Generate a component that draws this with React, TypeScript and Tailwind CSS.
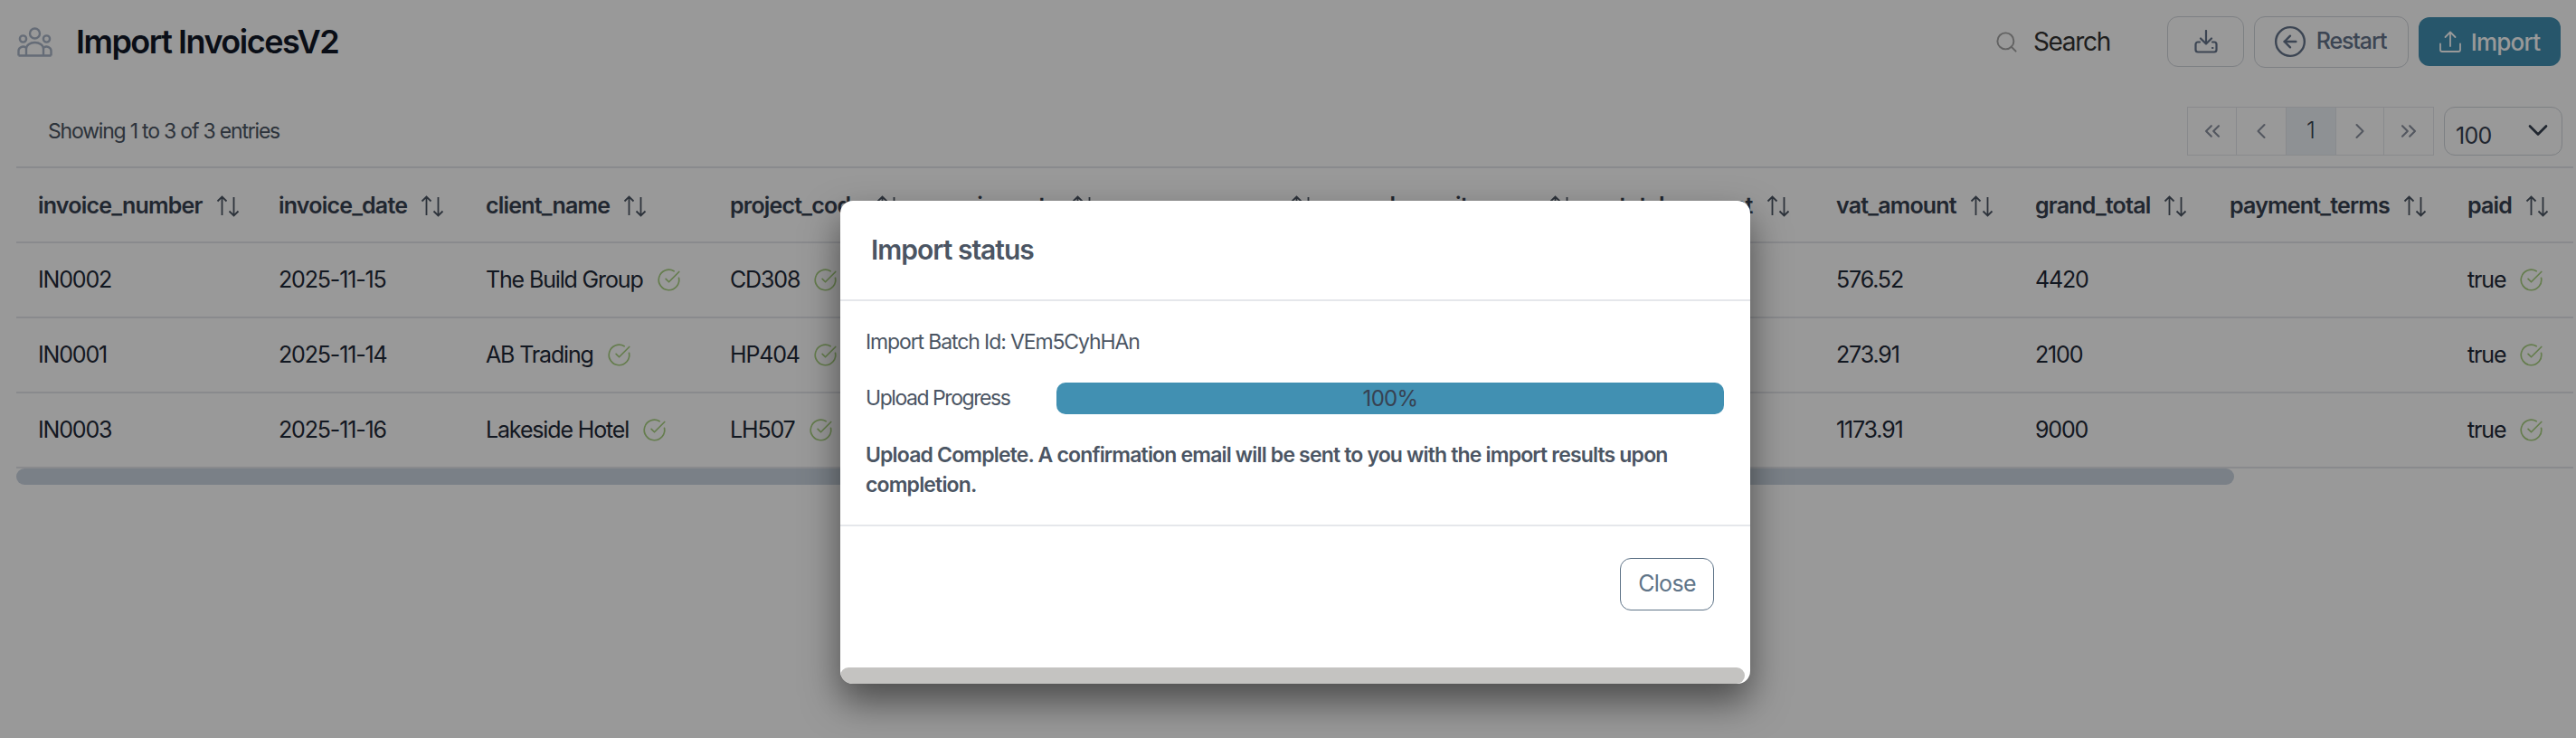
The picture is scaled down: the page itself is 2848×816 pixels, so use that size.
import { ChevronDown, ChevronLeft, ChevronRight, ChevronsLeft, ChevronsRight, CircleArrowLeft, CircleCheckBig, Search } from "lucide-react";

const FONT = "font-['Inter','Liberation_Sans',sans-serif]";

function SortIcon() {
  return (
    <svg width="26" height="24" viewBox="0 0 26 24" fill="none" stroke="#4b5563" strokeWidth="1.8" className="shrink-0">
      <path d="M6.5 22V1.5M1.5 6.5l5-5 5 5" />
      <path d="M19.5 2v20.5M14.5 17.5l5 5 5-5" />
    </svg>
  );
}

function Check() {
  return <CircleCheckBig size={27} strokeWidth={1.5} className="shrink-0 text-[#a8d080]" />;
}

const columns = [
  { name: "invoice_number", w: "w-[266px]" },
  { name: "invoice_date", w: "w-[229px]" },
  { name: "client_name", w: "w-[270px]" },
  { name: "project_code", w: "w-[249px]" },
  { name: "price_rate", w: "w-[254px]" },
  { name: "currency", w: "w-[200px]" },
  { name: "sales_unit_name", w: "w-[280px]" },
  { name: "total_amount", w: "w-[240px]" },
  { name: "vat_amount", w: "w-[220px]" },
  { name: "grand_total", w: "w-[215px]" },
  { name: "payment_terms", w: "w-[263px]" },
  { name: "paid", w: "w-[141px]" },
];

const rows = [
  ["IN0002", "2025-11-15", "The Build Group", "CD308", "", "", "", "", "576.52", "4420", "", "true"],
  ["IN0001", "2025-11-14", "AB Trading", "HP404", "", "", "", "", "273.91", "2100", "", "true"],
  ["IN0003", "2025-11-16", "Lakeside Hotel", "LH507", "", "", "", "", "1173.91", "9000", "", "true"],
];

const checked = [2, 3, 11];

export default function App() {
  return (
    <div className={`relative h-[816px] w-[2848px] overflow-hidden bg-white ${FONT}`}>
      <header className="flex h-[92px] items-center justify-between pl-[19px] pr-[17px]">
        <div className="flex items-center gap-[26px]">
          <svg width="39" height="33" viewBox="0 0 39 33" fill="none" stroke="#a9b4c6" strokeWidth="2.4">
            <circle cx="19.5" cy="7" r="5.5" />
            <circle cx="6.5" cy="13" r="3.6" />
            <circle cx="32.5" cy="13" r="3.6" />
            <path d="M10 31.5V24a9.5 7 0 0 1 19 0v7.5" />
            <path d="M1.5 31.5V26a5 4.5 0 0 1 8-3.5M37.5 31.5V26a5 4.5 0 0 0-8-3.5" />
            <path d="M1.5 31.5h36" />
          </svg>
          <h1 className="text-[36px] font-semibold leading-none tracking-[-1.5px] text-[#111827]">Import InvoicesV2</h1>
        </div>
        <div className="flex items-center">
          <Search size={27} strokeWidth={1.7} className="mr-[16px] text-[#a3a3a3]" />
          <span className="mr-[63px] text-[28px] tracking-[-1.3px] text-[#333]">Search</span>
          <button className="mr-[11px] flex h-[56px] w-[85px] items-center justify-center rounded-[12px] border-[1.5px] border-[#d1d5db]">
            <svg width="26" height="26" viewBox="0 0 26 26" fill="none" stroke="#64748b" strokeWidth="2.2" strokeLinecap="round" strokeLinejoin="round">
              <path d="M13 1v14M7 9.500l6 6 6-6" />
              <path d="M6 13.500H4a2.500 2.500 0 0 0-2.500 2.500v6A2.500 2.500 0 0 0 4 24.500h18a2.500 2.500 0 0 0 2.500-2.500v-6a2.500 2.500 0 0 0-2.500-2.500h-2" />
              <path d="M20 20h.4" />
            </svg>
          </button>
          <button className="mr-[11px] flex h-[57px] w-[171px] items-center justify-center gap-[10px] rounded-[12px] border-[1.5px] border-[#d1d5db] pr-[4px] text-[25px] font-medium tracking-[-1.1px] text-[#64748b]">
            <CircleArrowLeft size={38} strokeWidth={1.5} className="text-[#64748b]" />
            Restart
          </button>
          <button className="flex h-[54px] w-[157px] items-center justify-center gap-[11px] rounded-[12px] bg-[#4190b2] text-[26px] font-medium tracking-[-0.8px] text-white">
            <svg width="24" height="24" viewBox="0 0 24 24" fill="none" stroke="white" strokeWidth="1.8" strokeLinecap="round" strokeLinejoin="round">
              <path d="M12 17V1.500M6.500 7L12 1.500 17.500 7" />
              <path d="M1 14.500v6.500a2 2 0 0 0 2 2h18a2 2 0 0 0 2-2v-6.500" />
            </svg>
            Import
          </button>
        </div>
      </header>

      <div className="flex h-[92px] items-start justify-between pl-[53px] pr-[15px] pt-[26px]">
        <span className="mt-[12px] text-[23px] leading-[30px] tracking-[-1.2px] text-[#4b5563]">Showing 1 to 3 of 3 entries</span>
        <div className="flex items-start gap-[11px]">
          <div className="flex h-[54px] border border-[#e5e7eb] text-[#8b92a0]">
            <div className="flex w-[54px] items-center justify-center border-r border-[#e5e7eb]"><ChevronsLeft size={28} strokeWidth={1.8} /></div>
            <div className="flex w-[55px] items-center justify-center border-r border-[#e5e7eb]"><ChevronLeft size={28} strokeWidth={1.8} /></div>
            <div className="flex w-[54px] items-center justify-center bg-[#edf2f7] text-[25px] font-light text-[#374151]">1</div>
            <div className="flex w-[54px] items-center justify-center border-x border-[#e5e7eb]"><ChevronRight size={28} strokeWidth={1.8} /></div>
            <div className="flex w-[54px] items-center justify-center"><ChevronsRight size={28} strokeWidth={1.8} /></div>
          </div>
          <div className="flex h-[54px] w-[131px] items-start justify-between rounded-[12px] border border-[#d1d5db] pl-[12px] pr-[8px] text-[#374151]">
            <span className="mt-[14px] text-[25px] leading-[34px] tracking-[-0.7px]">100</span>
            <ChevronDown size={36} strokeWidth={1.8} className="mt-[7px]" />
          </div>
        </div>
      </div>

      <div className="ml-[18px] w-[2827px] overflow-hidden">
        <table className="w-[2827px] table-fixed border-collapse border-t-2 border-[#e5e7eb]">
          <thead>
            <tr className="h-[83px] border-b-2 border-[#e5e7eb]">
              {columns.map((c) => (
                <th key={c.name} className={`${c.w} pl-[24px] pt-[3px] text-left align-middle`}>
                  <div className="flex items-center gap-[15px] text-[25px] font-semibold tracking-[-0.8px] text-[#374151]">
                    {c.name}
                    <SortIcon />
                  </div>
                </th>
              ))}
            </tr>
          </thead>
          <tbody>
            {rows.map((r) => (
              <tr key={r[0]} className="h-[83px] border-b-2 border-[#e5e7eb]">
                {r.map((v, i) => (
                  <td key={i} className="pl-[24px] align-middle">
                    <div className="flex items-center gap-[15px] text-[25px] tracking-[-1.15px] text-[#1f2937]">
                      {v}
                      {checked.includes(i) ? <Check /> : null}
                    </div>
                  </td>
                ))}
              </tr>
            ))}
          </tbody>
        </table>
        <div className="h-[18px] w-[2452px] rounded-full bg-[#cbd5e1]" />
      </div>

      <div className="absolute inset-0 bg-black/40" />

      <div className="absolute left-[929px] top-[222px] flex h-[534px] w-[1006px] flex-col overflow-hidden rounded-[14px] bg-white shadow-[0_20px_40px_rgba(0,0,0,0.5)]">
        <div className="flex h-[111px] shrink-0 items-center border-b-2 border-[#e5e7eb] pl-[34px]">
          <h2 className="text-[30px] font-semibold tracking-[-1px] text-[#4b5563]">Import status</h2>
        </div>
        <div className="flex h-[249px] shrink-0 flex-col border-b-2 border-[#e5e7eb] pl-[28px] pr-[29px] pt-[29px]">
          <p className="text-[23px] leading-[32px] tracking-[-1.12px] text-[#4b5563]">Import Batch Id: VEm5CyhHAn</p>
          <div className="mt-[29px] flex h-[35px] items-center">
            <span className="w-[211px] shrink-0 text-[23px] tracking-[-1.45px] text-[#4b5563]">Upload Progress</span>
            <div className="flex h-[35px] flex-1 items-center justify-center rounded-[10px] bg-[#4190b2] text-[24px] tracking-[-0.7px] text-[#374151]">100%</div>
          </div>
          <p className="mt-[29px] text-[23px] font-semibold leading-[33px] tracking-[-0.83px] text-[#4b5563]">
            Upload Complete. A confirmation email will be sent to you with the import results upon completion.
          </p>
        </div>
        <div className="flex flex-1 items-start justify-end pr-[40px] pt-[35px]">
          <button className="h-[58px] w-[104px] rounded-[12px] border-[1.5px] border-[#5f7488] text-[25px] tracking-[-0.7px] text-[#5f7488]">Close</button>
        </div>
        <div className="h-[18px] w-[1000px] shrink-0 rounded-full bg-[#c4c3c1]" />
      </div>
    </div>
  );
}
